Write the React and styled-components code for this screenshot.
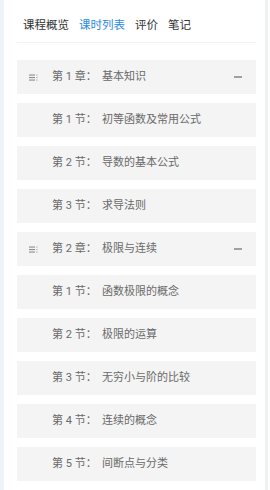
import React from "react";
import styled, { createGlobalStyle } from "styled-components";

const Global = createGlobalStyle`
  html, body { margin: 0; padding: 0; background: #ffffff; }
  body { font-family: Roboto, "Noto Sans CJK SC", sans-serif; }
  * { box-sizing: border-box; }
`;

const Page = styled.div`
  width: 268px;
  min-height: 490px;
  background: #ffffff;
  border-left: 4px solid #eef3f9;
  border-right: 3px solid #eef2f7;
  overflow: hidden;
`;

const Tabs = styled.div`
  display: flex;
  align-items: center;
  gap: 10px;
  height: 43px;
  margin: 0 9px 0 13px;
  padding: 8px 0 0 6px;
  border-bottom: 1px solid #f2f2f2;
`;

const Tab = styled.div`
  font-size: 11.5px;
  line-height: 16px;
  color: ${(p) => (p.$active ? "#2d8be2" : "#333333")};
`;

const List = styled.div`
  display: flex;
  flex-direction: column;
  gap: 9px;
  margin: 17px 9px 0 13px;
`;

const Row = styled.div`
  display: flex;
  align-items: center;
  height: 34px;
  background: #f4f4f4;
  padding: 0 14px 0 ${(p) => (p.$chapter ? "12px" : "35px")};
`;

const IconBox = styled.div`
  width: 23px;
  display: flex;
  align-items: center;
`;

const Label = styled.div`
  flex: 1;
  font-size: 11px;
  line-height: 16px;
  color: #6a6a6a;
  white-space: pre;
`;

const Minus = styled.div`
  width: 8px;
  height: 1.5px;
  background: #a0a0a0;
`;

const ListIcon = () => (
  <svg width="9" height="7" viewBox="0 0 9 7">
    <rect x="0" y="0.5" width="6" height="1.1" fill="#8c8c8c" />
    <rect x="0" y="3" width="6" height="1.1" fill="#8c8c8c" />
    <rect x="0" y="5.5" width="6" height="1.1" fill="#8c8c8c" />
    <rect x="7.3" y="0.5" width="1.2" height="1.1" fill="#a6a6a6" />
    <rect x="7.3" y="3" width="1.2" height="1.1" fill="#a6a6a6" />
    <rect x="7.3" y="5.5" width="1.2" height="1.1" fill="#a6a6a6" />
  </svg>
);

const data = [
  { chapter: true, text: "第 1 章：  基本知识" },
  { text: "第 1 节：  初等函数及常用公式" },
  { text: "第 2 节：  导数的基本公式" },
  { text: "第 3 节：  求导法则" },
  { chapter: true, text: "第 2 章：  极限与连续" },
  { text: "第 1 节：  函数极限的概念" },
  { text: "第 2 节：  极限的运算" },
  { text: "第 3 节：  无穷小与阶的比较" },
  { text: "第 4 节：  连续的概念" },
  { text: "第 5 节：  间断点与分类" },
  { text: "" },
];

export default function App() {
  return (
    <>
      <Global />
      <Page>
        <Tabs>
          <Tab>课程概览</Tab>
          <Tab $active>课时列表</Tab>
          <Tab>评价</Tab>
          <Tab>笔记</Tab>
        </Tabs>
        <List>
          {data.map((d, i) => (
            <Row key={i} $chapter={d.chapter}>
              {d.chapter && (
                <IconBox>
                  <ListIcon />
                </IconBox>
              )}
              <Label>{d.text}</Label>
              {d.chapter && <Minus />}
            </Row>
          ))}
        </List>
      </Page>
    </>
  );
}
